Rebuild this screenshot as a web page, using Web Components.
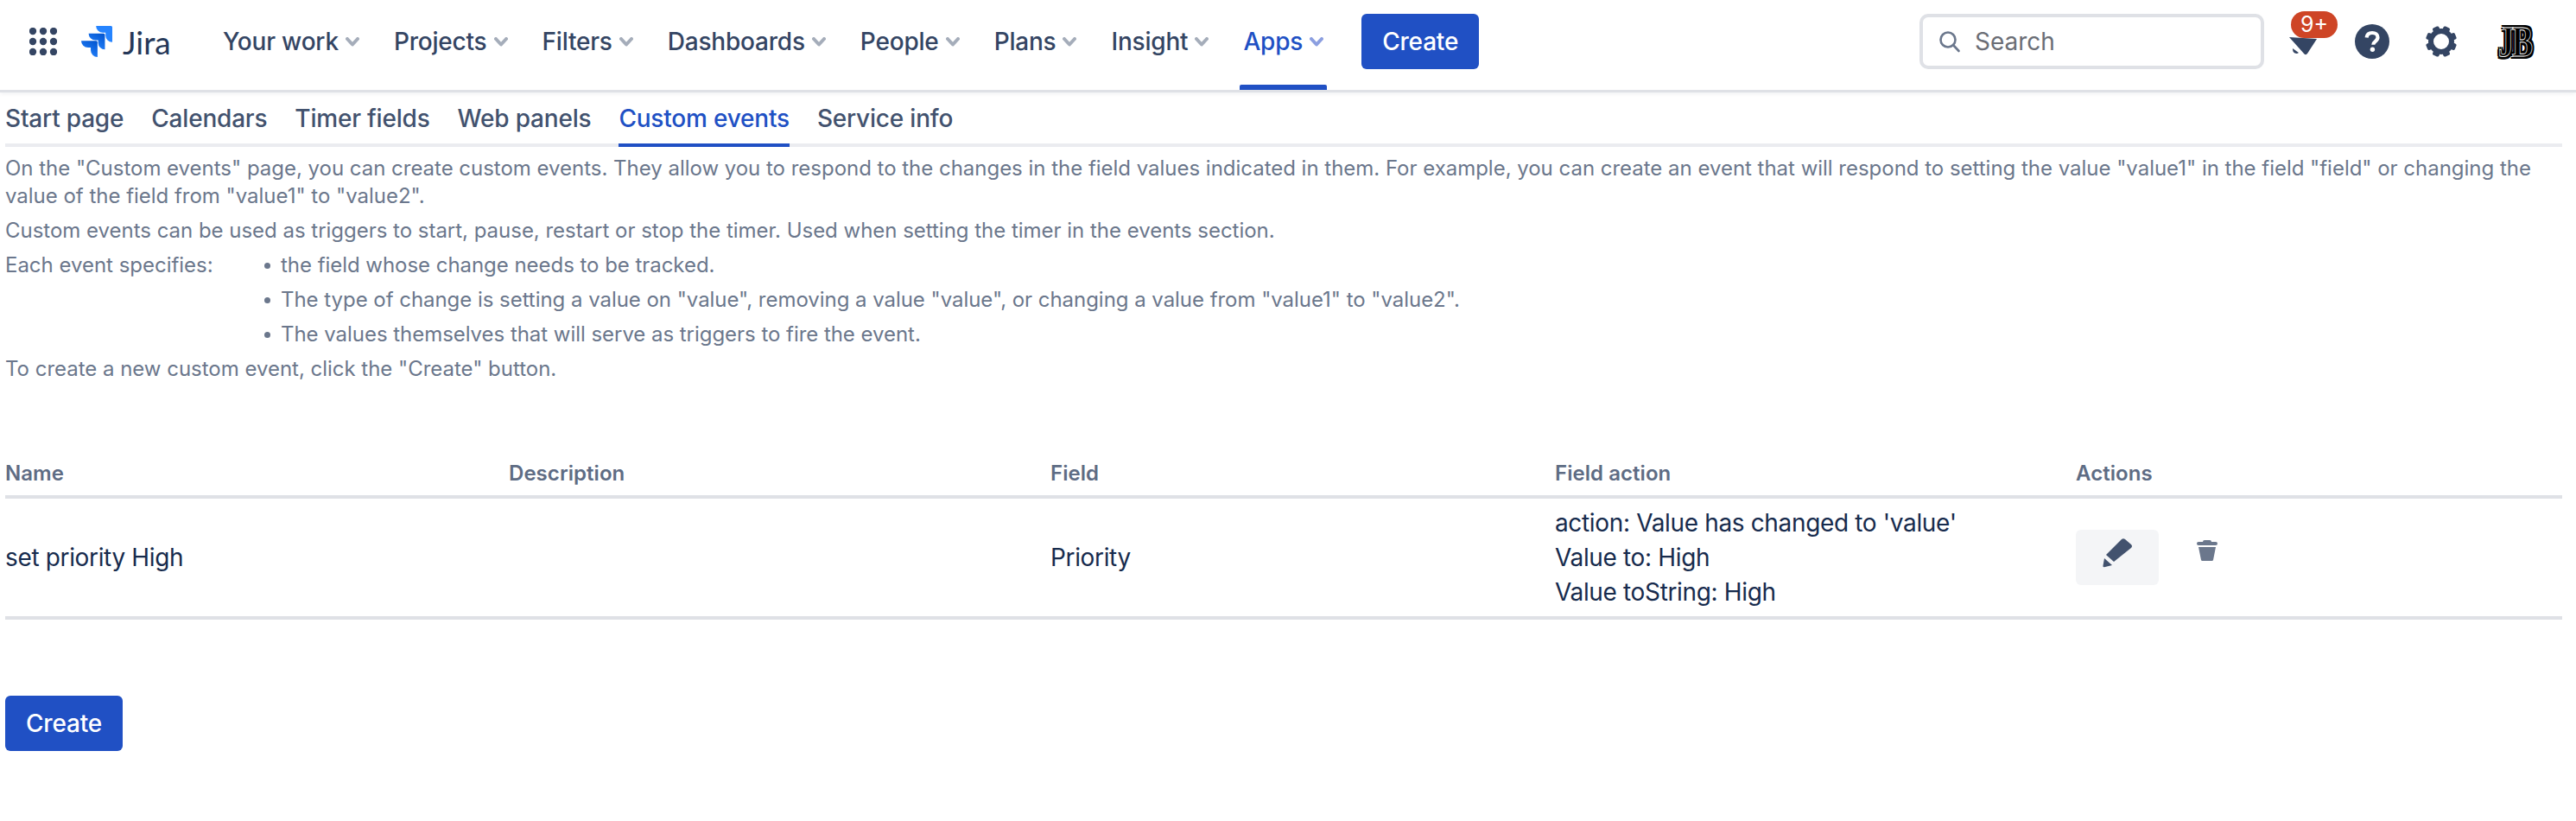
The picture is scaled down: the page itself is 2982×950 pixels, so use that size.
<!DOCTYPE html>
<html lang="en">
<head>
<meta charset="utf-8">
<title>Custom events</title>
<style>
  html, body { margin: 0; background: #fff; }
  body { font-family: Inter, "Liberation Sans", sans-serif; color: #172b4d; }
</style>
</head>
<body>
<jira-header>
  <nav-item slot="nav">Your work</nav-item>
  <nav-item slot="nav">Projects</nav-item>
  <nav-item slot="nav">Filters</nav-item>
  <nav-item slot="nav">Dashboards</nav-item>
  <nav-item slot="nav">People</nav-item>
  <nav-item slot="nav">Plans</nav-item>
  <nav-item slot="nav">Insight</nav-item>
  <nav-item slot="nav" active>Apps</nav-item>
</jira-header>
<page-tabs>
  <tab-item>Start page</tab-item>
  <tab-item>Calendars</tab-item>
  <tab-item>Timer fields</tab-item>
  <tab-item>Web panels</tab-item>
  <tab-item active>Custom events</tab-item>
  <tab-item>Service info</tab-item>
</page-tabs>
<help-text></help-text>
<events-table></events-table>
<primary-button style="margin: 88px 0 0 6px">Create</primary-button>

<script>
// Small helper, every element below just hands its html to this
const shadow = (el, html) => {
  el.attachShadow({ mode: "open" }).innerHTML = html;
};

class PrimaryButton extends HTMLElement {
  connectedCallback() {
    shadow(this, `
      <style>
        :host { display: inline-flex; align-items: center; justify-content: center; box-sizing: border-box;
          width: 136px; height: 64px; border-radius: 6px; background: #2050c4; color: #fff;
          font: 500 28px/34px Inter, sans-serif; letter-spacing: -0.2px; }
      </style>
      <slot></slot>`);
  }
}

class NavItem extends HTMLElement {
  connectedCallback() {
    const color = this.hasAttribute("active") ? "#8c9fe0" : "#a5adba";
    shadow(this, `
      <style>
        :host { display: flex; align-items: center; gap: 8px; height: 96px; padding: 0 4px; margin-right: 32px; position: relative;
          font: 500 28px/34px Inter, sans-serif; letter-spacing: -0.2px; color: #344563; box-sizing: border-box; }
        :host([active]) { color: #2050c4; }
        :host([active])::after { content: ""; position: absolute; left: 0; right: 0; bottom: -8px; height: 6px;
          background: #2050c4; border-radius: 2px 2px 0 0; }
      </style>
      <slot></slot>
      <svg width="16" height="11" viewBox="0 0 16 11"><path d="M2 2l6 6.500 6-6.500" fill="none" stroke="${color}" stroke-width="4" stroke-linecap="round" stroke-linejoin="round"/></svg>`);
  }
}

class JiraHeader extends HTMLElement {
  connectedCallback() {
    const dots = [4, 16, 28].flatMap((y) => [4, 16, 28].map((x) => `<circle cx="${x}" cy="${y}" r="4.200"/>`)).join("");
    const teeth = [22.5, 67.5, 112.5, 157.5, 202.5, 247.5, 292.5, 337.5]
      .map((a) => `<rect x="14" y="0" width="8" height="8" rx="2" transform="rotate(${a} 18 18)"/>`).join("");
    shadow(this, `
      <style>
        :host { display: flex; align-items: center; box-sizing: border-box; height: 107px; padding: 0 49px 8px 34px;
          border-bottom: 3px solid #dfe1e6; box-shadow: 0 2px 4px rgba(9,30,66,.06); }
        .logo { display: flex; align-items: center; margin-left: 28px; margin-right: 56px; gap: 12px; }
        .word { width: 56px; font: 400 37px/1 Lato, sans-serif; color: #253858; }
        nav { display: flex; align-items: center; }
        primary-button { margin-left: 8px; }
        .search { display: flex; align-items: center; gap: 16px; box-sizing: border-box; width: 399px; height: 64px;
          margin-left: auto; padding-left: 18px; border: 4px solid #dfe1e6; border-radius: 10px;
          font: 400 28px/34px Inter, sans-serif; color: #6b6e76; }
        .bell { position: relative; width: 60px; height: 64px; margin-left: 27px; }
        .bell svg { position: absolute; left: 0; top: 24px; }
        .badge { position: absolute; left: 4px; top: -3px; width: 54px; height: 31px; border-radius: 16px; background: #ce4526;
          color: #fff; font: 400 25px/31px Inter, sans-serif; text-align: center; }
        .help { margin-left: 18px; }
        .gear { margin-left: 42px; }
        .avatar { display: block; width: 44px; margin-left: 45px; text-align: center;
          font: 700 36px/36px "Liberation Serif", serif; letter-spacing: -2px; color: #000;
          -webkit-text-stroke: .6px #fff; transform: scaleY(1.4);
          text-shadow: 2.500px 0 #000, -2.500px 0 #000, 0 2px #000, 0 -2px #000, 2px 2px #000, -2px 2px #000, 2px -2px #000, -2px -2px #000; }
      </style>
      <svg width="32" height="32" viewBox="0 0 32 32" fill="#344563">${dots}</svg>
      <div class="logo">
        <svg width="36" height="36" viewBox="0 0 24 24">
          <defs><linearGradient id="g" x1="1" y1="0" x2=".4" y2="1"><stop offset="0" stop-color="#0052cc"/><stop offset="1" stop-color="#2684ff"/></linearGradient></defs>
          <path fill="#2684ff" d="M23.013 0H11.455a5.215 5.215 0 0 0 5.215 5.215h2.129v2.057A5.215 5.215 0 0 0 24 12.483V1.005A1.001 1.001 0 0 0 23.013 0Z"/>
          <path fill="url(#g)" d="M17.294 5.757H5.736a5.215 5.215 0 0 0 5.215 5.214h2.129v2.058a5.218 5.218 0 0 0 5.215 5.214V6.758a1.001 1.001 0 0 0-1.001-1.001z"/>
          <path fill="url(#g)" d="M11.571 11.513H0a5.218 5.218 0 0 0 5.232 5.215h2.13v2.057A5.215 5.215 0 0 0 12.575 24V12.518a1.005 1.005 0 0 0-1.005-1.005z"/>
        </svg>
        <span class="word">Jira</span>
      </div>
      <nav><slot name="nav"></slot></nav>
      <primary-button>Create</primary-button>
      <div class="search">
        <svg width="26" height="26" viewBox="0 0 26 26" fill="none" stroke="#6b778c" stroke-width="2.600"><circle cx="11" cy="11" r="8.500"/><path d="M17 17l6.500 7" stroke-linecap="round"/></svg>
        <span>Search</span>
      </div>
      <div class="bell">
        <svg width="40" height="28" viewBox="0 0 40 28" fill="#344563"><path d="M2 3L34 5 23 22q-1.500 2-3.500.5z"/><path d="M6 16l7 5q-2 1.500-4.500.5T6 16z"/></svg>
        <span class="badge">9+</span>
      </div>
      <svg class="help" width="40" height="40" viewBox="0 0 40 40"><circle cx="20" cy="20" r="20" fill="#344563"/><path d="M13.600 15.400c.4-3.500 3-5.400 6.500-5.400 3.700 0 6.400 2.200 6.400 5.300 0 4.500-5.200 4.400-5.200 8.400" fill="none" stroke="#fff" stroke-width="4.200"/><circle cx="20.400" cy="29.200" r="2.700" fill="#fff"/></svg>
      <svg class="gear" width="36" height="36" viewBox="0 0 36 36" fill="#344563"><circle cx="18" cy="18" r="12" fill="none" stroke="#344563" stroke-width="6"/>${teeth}</svg>
      <span class="avatar">JB</span>`);
  }
}

class TabItem extends HTMLElement {
  connectedCallback() {
    shadow(this, `
      <style>
        :host { display: block; box-sizing: border-box; height: 63px; padding-top: 13px; margin-bottom: -4px; border-bottom: 4px solid transparent;
          font: 500 28px/34px Inter, sans-serif; letter-spacing: -0.2px; color: #42526e; }
        :host([active]) { color: #2050c4; border-bottom-color: #2050c4; }
      </style>
      <slot></slot>`);
  }
}

class PageTabs extends HTMLElement {
  connectedCallback() {
    shadow(this, `
      <style>
        :host { display: flex; gap: 32px; margin: 0 16px 0 6px; border-bottom: 4px solid #ebecf0; }
      </style>
      <slot></slot>`);
  }
}

class HelpText extends HTMLElement {
  connectedCallback() {
    shadow(this, `
      <style>
        :host { display: block; margin: 9px 12px 0 6px; font: 400 24px/32px Inter, sans-serif; color: #6b778c; letter-spacing: -0.02px; }
        p { margin: 0 0 8px; }
        .spec { display: grid; grid-template-columns: 319px 1fr; }
        ul { margin: 0; padding: 0; list-style: none; letter-spacing: -0.04px; }
        li { margin-bottom: 8px; position: relative; }
        li::before { content: ""; position: absolute; left: -19px; top: 13px; width: 7px; height: 7px; border-radius: 50%; background: #6b778c; }
      </style>
      <p>On the "Custom events" page, you can create custom events. They allow you to respond to the changes in the field values indicated in them. For example, you can create an event that will respond to setting the value "value1" in the field "field" or changing the value of the field from "value1" to "value2".</p>
      <p>Custom events can be used as triggers to start, pause, restart or stop the timer. Used when setting the timer in the events section.</p>
      <div class="spec">
        <span>Each event specifies:</span>
        <ul>
          <li>the field whose change needs to be tracked.</li>
          <li>The type of change is setting a value on "value", removing a value "value", or changing a value from "value1" to "value2".</li>
          <li>The values themselves that will serve as triggers to fire the event.</li>
        </ul>
      </div>
      <p>To create a new custom event, click the "Create" button.</p>`);
  }
}

class EventsTable extends HTMLElement {
  connectedCallback() {
    shadow(this, `
      <style>
        :host { display: block; margin: 90px 16px 0 6px; }
        .row { display: grid; grid-template-columns: 583px 627px 584px 603px 1fr; align-items: center; }
        .head { height: 40px; border-bottom: 4px solid #dfe1e6; font: 600 24px/30px Inter, sans-serif; letter-spacing: .05px; color: #5e6c84; align-items: start; }
        .body { height: 140px; box-sizing: border-box; border-bottom: 4px solid #dfe1e6; font: 400 28px/40px Inter, sans-serif; letter-spacing: -0.35px; color: #172b4d; }
        .actions { display: flex; align-items: center; }
        .edit { display: block; box-sizing: border-box; width: 96px; height: 64px; padding: 8px 0 0 30px; border-radius: 6px; background: #f4f5f7; }
        .trash { margin: -16px 0 0 44px; }
      </style>
      <div class="row head"><span>Name</span><span>Description</span><span>Field</span><span>Field action</span><span>Actions</span></div>
      <div class="row body">
        <span>set priority High</span>
        <span></span>
        <span>Priority</span>
        <span>action: Value has changed to 'value'<br>Value to: High<br>Value toString: High</span>
        <div class="actions">
          <div class="edit"><svg width="36" height="36" viewBox="0 0 36 36" fill="#42526e"><path d="M5 21L23 3q2-1.500 4 0l7 6q2 2 0 4L14 29z"/><path d="M3 25l9 8-9 2.200q-2 .3-1.500-1.700z"/></svg></div>
          <svg class="trash" width="24" height="24" viewBox="0 0 24 24" fill="#6b778c"><path d="M7 2q0-2 2-2h6q2 0 2 2h5q2 0 2 2t-2 2H2Q0 6 0 4t2-2z"/><path d="M2 8h20l-3 15q-.2 1-1.500 1h-11Q5.200 24 5 23z"/></svg>
        </div>
      </div>`);
  }
}

customElements.define("primary-button", PrimaryButton);
customElements.define("nav-item", NavItem);
customElements.define("jira-header", JiraHeader);
customElements.define("tab-item", TabItem);
customElements.define("page-tabs", PageTabs);
customElements.define("help-text", HelpText);
customElements.define("events-table", EventsTable);
</script>
</body>
</html>
